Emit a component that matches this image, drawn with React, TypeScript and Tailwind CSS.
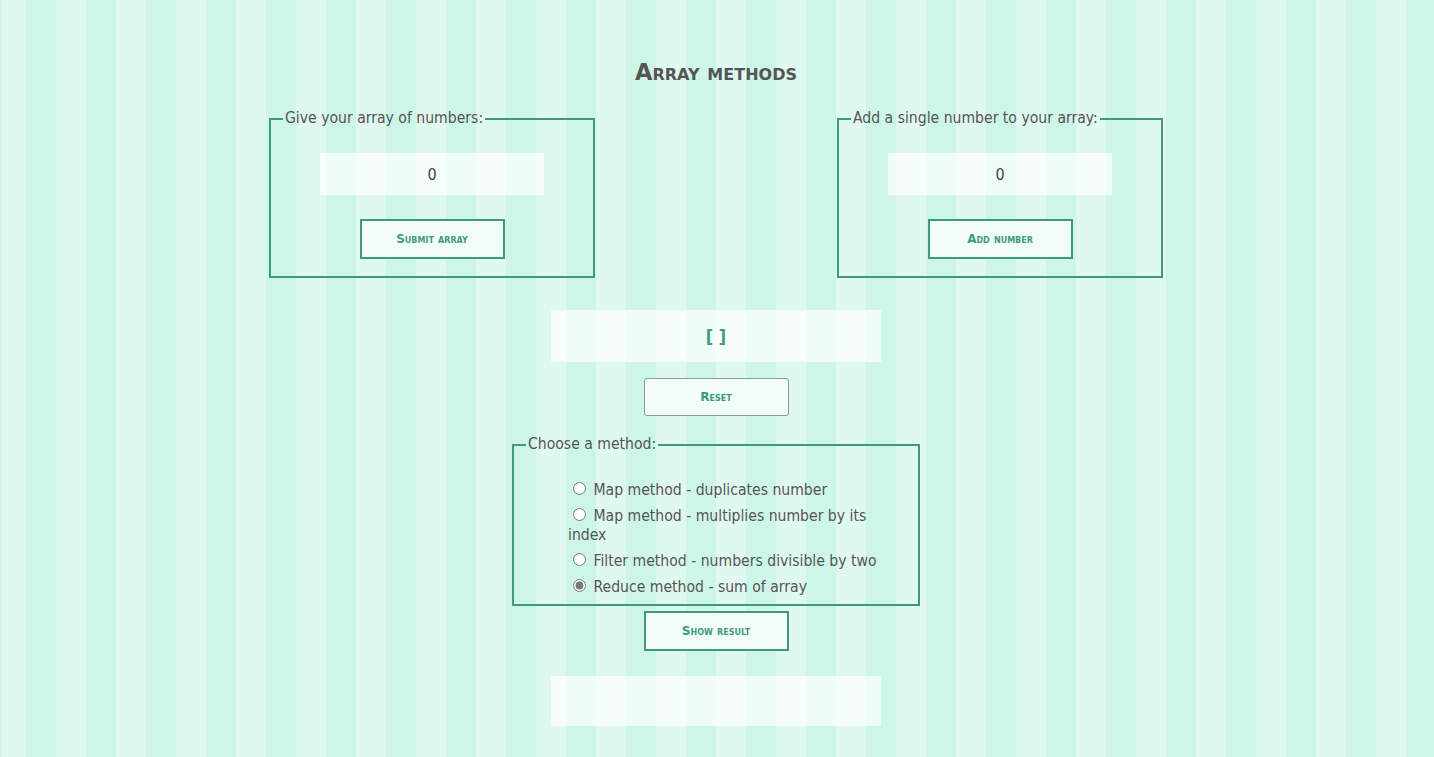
import React, { useState } from 'react'

const METHODS = [
  'Map method - duplicates number',
  'Map method - multiplies number by its index',
  'Filter method - numbers divisible by two',
  'Reduce method - sum of array',
]

const wide = { fontFamily: '"DejaVu Sans", sans-serif' }

const btn =
  'w-[145px] h-[40px] border-2 border-[#3d9b7c] bg-[#f2fcf8] text-[#3d9b7c] text-[12px] font-bold [font-variant:small-caps] leading-none'

export default function App() {
  const [arr, setArr] = useState<number[]>([])
  const [first, setFirst] = useState('0')
  const [single, setSingle] = useState('0')
  const [method, setMethod] = useState(3)

  return (
    <div
      className="min-h-screen w-full pr-[2px] bg-[repeating-linear-gradient(90deg,#cef6e8_0px,#cef6e8_30px,#e0f9f0_30px,#e0f9f0_60px)] bg-[position:26px_0] text-[#555] pb-8"
      style={{ fontFamily: '"DejaVu Sans Condensed", "DejaVu Sans", sans-serif' }}
    >
      <h1 style={wide} className="pt-[56px] text-center text-[22.5px] font-bold leading-[32px] [font-variant:small-caps]">Array methods</h1>

      <div className="w-[894px] mx-auto mt-[22px] flex justify-between">
        <fieldset className="w-[326px] border-2 border-[#3d9b7c] px-[12px] pb-[17px]">
          <legend className="px-[2px] text-[15.6px] leading-[17px]">Give your array of numbers:</legend>
          <div className="flex flex-col items-center pt-[26px] gap-[24px]">
            <input value={first} onChange={e => setFirst(e.target.value)} className="w-[224px] h-[42px] bg-white/70 text-center text-[16px] text-[#444] outline-none" />
            <button style={wide} className={btn} onClick={() => setArr(first.split(',').map(Number))}>Submit array</button>
          </div>
        </fieldset>

        <fieldset className="w-[326px] border-2 border-[#3d9b7c] px-[12px] pb-[17px]">
          <legend className="px-[2px] text-[15.6px] leading-[17px]">Add a single number to your array:</legend>
          <div className="flex flex-col items-center pt-[26px] gap-[24px]">
            <input value={single} onChange={e => setSingle(e.target.value)} className="w-[224px] h-[42px] bg-white/70 text-center text-[16px] text-[#444] outline-none" />
            <button style={wide} className={btn} onClick={() => setArr([...arr, Number(single)])}>Add number</button>
          </div>
        </fieldset>
      </div>

      <div className="w-[330px] h-[52px] mx-auto mt-[32px] bg-white/70 flex items-center justify-center text-[#3d9b7c] text-[18px] font-bold">
        [ {arr.join(', ')} ]
      </div>

      <div className="flex justify-center mt-[16px]">
        <button style={wide} onClick={() => setArr([])} className="w-[145px] h-[38px] border border-[#8a9a94] rounded-[3px] bg-[#f2fcf8] text-[#3d9b7c] text-[12px] font-bold [font-variant:small-caps] leading-none">
          Reset
        </button>
      </div>

      <fieldset className="w-[408px] mx-auto mt-[20px] border-2 border-[#3d9b7c] px-[12px] pb-[7px]">
        <legend className="px-[2px] text-[15.6px] leading-[17px]">Choose a method:</legend>
        <div className="w-[330px] ml-[42px] pt-[26px] flex flex-col gap-[5px] text-[15.6px] leading-[19px]">
          {METHODS.map((m, i) => (
            <label key={m} className="block">
              <input
                type="radio"
                name="method"
                checked={method === i}
                onChange={() => setMethod(i)}
                className="ml-[5px] mr-[3px] mt-[3px] accent-[#777]"
              />{' '}
              {m}
            </label>
          ))}
        </div>
      </fieldset>

      <div className="flex justify-center mt-[5px]">
        <button style={wide} className={btn}>Show result</button>
      </div>

      <div className="w-[330px] h-[50px] mx-auto mt-[25px] bg-white/70" />
    </div>
  )
}
